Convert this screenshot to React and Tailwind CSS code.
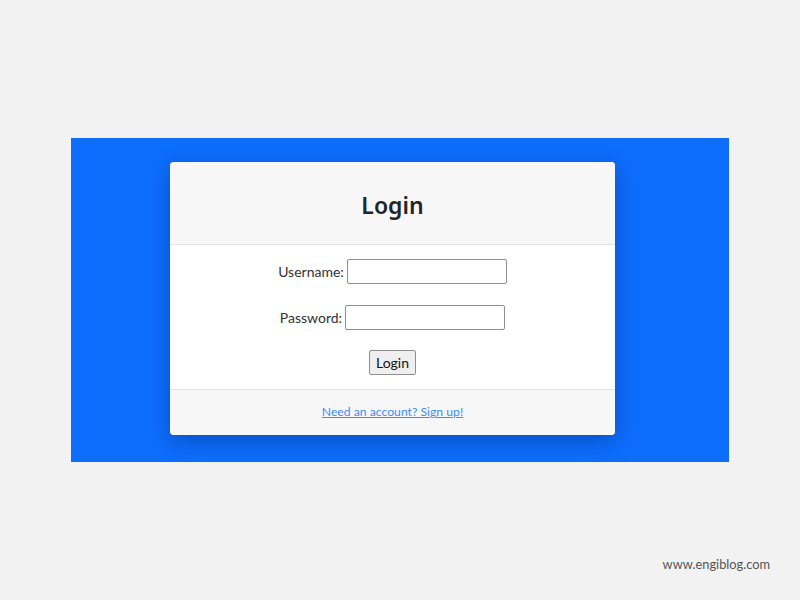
export default function App() {
  return (
    <div className="min-h-[600px] w-[800px] bg-[#f2f2f2] flex flex-col font-['Lato',sans-serif] text-[#212529]">
      <div className="h-[138px]" />
      <div className="ml-[71px] w-[658px] h-[324px] bg-[#0d6efd] pt-[24px] pl-[99px]">
        <div className="w-[445px] bg-white rounded-[4px] overflow-hidden shadow-[0_6px_22px_rgba(0,20,80,0.35)]">
          <div className="h-[83px] bg-[#f7f7f7] border-b border-[#e3e3e3] flex items-center justify-center">
            <h1 className="text-[23px] font-semibold leading-none pt-[5px] font-['Noto_Sans',sans-serif]">Login</h1>
          </div>
          <form className="flex flex-col items-center pt-[14px] pb-[14px] text-[14px] text-[#333]">
            <div className="flex items-center gap-[3px] h-[25px]">
              <label>Username:</label>
              <input className="w-[160px] h-[25px] border border-[#8f8f8f] rounded-[2px] bg-white" />
            </div>
            <div className="flex items-center gap-[3px] h-[25px] mt-[21px]">
              <label>Password:</label>
              <input type="password" className="w-[160px] h-[25px] border border-[#8f8f8f] rounded-[2px] bg-white" />
            </div>
            <button type="button" className="mt-[20px] w-[47px] h-[25px] border border-[#8f8f8f] rounded-[2px] bg-[#efefef] text-[14px] text-[#111] leading-none">
              Login
            </button>
          </form>
          <div className="h-[46px] bg-[#f7f7f7] border-t border-[#e3e3e3] flex items-center justify-center">
            <a href="#" className="text-[12.2px] text-[#3d8bfd] underline">Need an account? Sign up!</a>
          </div>
        </div>
      </div>
      <div className="flex justify-end pr-[30px] pt-[93px]">
        <span className="text-[12.8px] text-[#555]">www.engiblog.com</span>
      </div>
    </div>
  );
}
